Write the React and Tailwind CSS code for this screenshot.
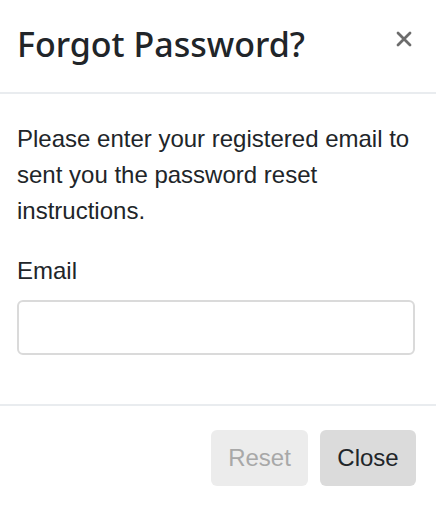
export default function App() {
  return (
    <div className="w-[436px] h-[522px] bg-white text-[#212529]" style={{ fontFamily: '"Liberation Sans", Arial, sans-serif' }}>
      {/* Header */}
      <div className="h-[94px] flex items-start justify-between pl-[17px] pr-[24px] pt-[23px] border-b-2 border-[#e9ecef]">
        <h5 className="text-[34px] leading-[42px] font-medium" style={{ fontFamily: '"Noto Sans", sans-serif' }}>Forgot Password?</h5>
        <button className="mt-[8px] w-[17px] h-[16px] flex items-center justify-center text-[#6c6c6c]" aria-label="Close">
          <svg viewBox="0 0 16 16" width="16" height="16" fill="none" stroke="currentColor" strokeWidth="2.8" strokeLinecap="round">
            <path d="M2 2 L14 14 M14 2 L2 14" />
          </svg>
        </button>
      </div>

      {/* Body */}
      <div className="pl-[17px] pr-[21px] pt-[27px] pb-[49px]">
        <p className="text-[24px] leading-[36px] mb-[24px]">
          Please enter your registered email to sent you the password reset instructions.
        </p>
        <label className="block text-[24px] leading-[36px] mb-[11px]">Email</label>
        <input type="email" className="block w-full h-[55px] rounded-[6px] border-2 border-[#dadada] px-3 text-[24px] outline-none" />
      </div>

      {/* Footer */}
      <div className="border-t-2 border-[#e9ecef] flex justify-end gap-[12px] pt-[24px] pr-[20px]">
        <button disabled className="w-[97px] h-[56px] rounded-[6px] bg-[#ececec] text-[#a8a8a8] text-[24px]">Reset</button>
        <button className="w-[96px] h-[56px] rounded-[6px] bg-[#dbdbdb] text-[#212529] text-[24px]">Close</button>
      </div>
    </div>
  )
}
